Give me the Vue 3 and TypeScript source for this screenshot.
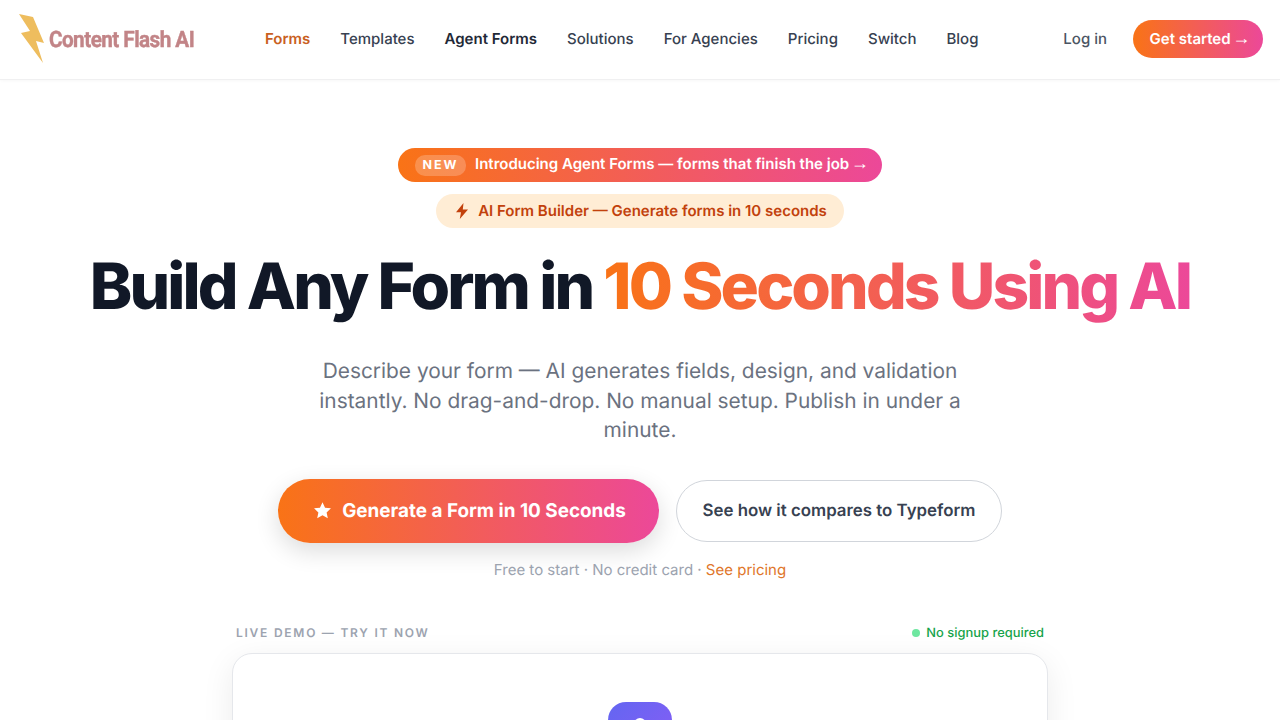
<script setup lang="ts">
const links: { label: string; cls?: string }[] = [
  { label: 'Forms', cls: 'active' },
  { label: 'Templates' },
  { label: 'Agent Forms', cls: 'dark' },
  { label: 'Solutions' },
  { label: 'For Agencies' },
  { label: 'Pricing' },
  { label: 'Switch' },
  { label: 'Blog' },
]
</script>

<template>
  <div class="page">
    <header class="topbar">
      <a class="logo">
        <svg class="bolt" width="28" height="50" viewBox="0 0 28 50">
          <path d="M1 0 L15 3 L26 29 L18 27 L25 49 L3 19 L12 17 Z" fill="#eebd5e" />
        </svg>
        <span class="logo-text">Content Flash AI</span>
      </a>
      <nav class="nav">
        <a v-for="l in links" :key="l.label" :class="['nav-link', l.cls]">{{ l.label }}</a>
      </nav>
      <div class="actions">
        <a class="login">Log in</a>
        <a class="start"><span>Get started <span class="arrow">→</span></span></a>
      </div>
    </header>

    <main class="hero">
      <a class="pill-new"><span class="new">NEW</span><span>Introducing Agent Forms — forms that finish the job <span class="arrow">→</span></span></a>
      <div class="pill-ai">
        <svg width="14" height="16" viewBox="0 0 14 16"><path d="M8.5 0 L1 9.2 H6 L4.8 16 L13 6.6 H7.8 Z" fill="#c2410c" /></svg>
        <span>AI Form Builder — Generate forms in 10 seconds</span>
      </div>
      <h1 class="title">Build Any Form in <span class="grad">10 Seconds Using AI</span></h1>
      <p class="sub">Describe your form — AI generates fields, design, and validation instantly. No drag-and-drop. No manual setup. Publish in under a minute.</p>
      <div class="cta">
        <a class="primary">
          <svg width="19" height="19" viewBox="0 0 24 24"><path d="M12 1.5l3.2 6.9 7.5.9-5.5 5.1 1.5 7.4L12 18.1l-6.7 3.7 1.5-7.4L1.3 9.3l7.5-.9z" fill="#fff" /></svg>
          Generate a Form in 10 Seconds
        </a>
        <a class="secondary">See how it compares to Typeform</a>
      </div>
      <p class="note">Free to start · No credit card · <a class="note-link">See pricing</a></p>
      <section class="demo">
        <div class="demo-head">
          <span class="demo-label">LIVE DEMO — TRY IT NOW</span>
          <span class="demo-free"><i class="dot"></i>No signup required</span>
        </div>
        <div class="demo-card">
          <div class="demo-icon">
            <svg width="40" height="40" viewBox="0 0 40 40"><circle cx="20" cy="10" r="6" fill="#fff" /></svg>
          </div>
        </div>
      </section>
    </main>
  </div>
</template>

<style>
html, body { margin: 0; overflow: hidden; background: #fff; }
</style>

<style scoped>
.page {
  height: 720px;
  overflow: hidden;
  font-family: Inter, "Liberation Sans", sans-serif;
  text-rendering: geometricPrecision;
  background: #fff;
}
.arrow {
  font-family: "Liberation Sans", sans-serif;
  font-weight: 700;
  font-size: 1.2em;
  line-height: 0;
  letter-spacing: -1px;
  margin-left: -2px;
}
.topbar {
  height: 80px;
  box-sizing: border-box;
  border-bottom: 1px solid #f0f0f1;
  box-shadow: 0 1px 3px rgba(0, 0, 0, 0.03);
  display: flex;
  align-items: center;
  padding: 0 17px 1px 18px;
}
.logo { display: flex; align-items: center; width: 247px; flex: none; }
.bolt { flex: none; }
.logo-text {
  font-family: Roboto, sans-serif;
  font-weight: 700;
  font-size: 22.5px;
  letter-spacing: -0.6px;
  color: #c28487;
  margin: 1px 0 0 3px;
  transform: scaleX(0.92);
  transform-origin: left center;
  white-space: nowrap;
  filter: blur(0.3px);
  -webkit-text-stroke: 0.4px #c28487;
}
.nav { display: flex; gap: 30px; flex: 1; margin-bottom: 2px; }
.nav-link { font-size: 15px; font-weight: 500; color: #374151; }
.nav-link.active { color: #c9601e; font-weight: 600; }
.nav-link.dark { color: #1f2937; font-weight: 600; }
.actions { display: flex; align-items: center; gap: 26px; }
.login { font-size: 15px; font-weight: 500; color: #4b5563; margin-bottom: 2px; }
.start {
  height: 38px;
  width: 130px;
  box-sizing: border-box;
  padding: 0 0 2px 3px;
  border-radius: 19px;
  display: flex;
  align-items: center;
  justify-content: center;
  color: #fff;
  font-size: 15px;
  font-weight: 600;
  background: linear-gradient(90deg, #f97316, #ec4899);
}
.hero {
  display: flex;
  flex-direction: column;
  align-items: center;
  padding-top: 68px;
}
.pill-new {
  height: 34px;
  width: 484px;
  box-sizing: border-box;
  padding: 0 0 3px 3px;
  border-radius: 17px;
  background: linear-gradient(90deg, #f97316, #ec4899);
  display: flex;
  align-items: center;
  justify-content: center;
  gap: 9px;
  color: #fff;
  font-size: 15px;
  font-weight: 600;
}
.new {
  background: rgba(255, 255, 255, 0.22);
  border-radius: 10px;
  height: 21px;
  width: 51px;
  margin-top: 3px;
  display: flex;
  align-items: center;
  justify-content: center;
  font-size: 12.5px;
  font-weight: 700;
  letter-spacing: 2px;
}
.pill-ai {
  margin-top: 12px;
  height: 34px;
  width: 408px;
  box-sizing: border-box;
  padding: 0 0 1px 2px;
  border-radius: 17px;
  background: #ffedd5;
  color: #c2410c;
  font-size: 15px;
  font-weight: 600;
  display: flex;
  align-items: center;
  justify-content: center;
  gap: 9px;
}
.title {
  margin: 20px 0 0;
  font-size: 64px;
  line-height: 78px;
  font-weight: 800;
  letter-spacing: -2.88px;
  color: #111827;
  white-space: nowrap;
}
.grad {
  background: linear-gradient(90deg, #f97316, #ec4899);
  -webkit-background-clip: text;
  background-clip: text;
  color: transparent;
}
.sub {
  margin: 31px 0 0;
  width: 680px;
  text-align: center;
  font-size: 20.88px;
  line-height: 29.5px;
  color: #6b7280;
}
.cta { display: flex; align-items: center; gap: 17px; margin-top: 33px; }
.primary {
  height: 64px;
  width: 381px;
  box-sizing: border-box;
  padding-left: 2px;
  border-radius: 32px;
  background: linear-gradient(90deg, #f97316, #ec4899);
  box-shadow: 0 8px 24px rgba(0, 0, 0, 0.14);
  display: flex;
  align-items: center;
  justify-content: center;
  gap: 10px;
  color: #fff;
  font-size: 18.9px;
  font-weight: 700;
}
.secondary {
  height: 62px;
  width: 326px;
  box-sizing: border-box;
  border: 1px solid #d1d5db;
  border-radius: 31px;
  display: flex;
  align-items: center;
  justify-content: center;
  color: #374151;
  font-size: 16.85px;
  font-weight: 600;
}
.note { margin: 17px 0 0; font-size: 15px; line-height: 20px; color: #9ca3af; }
.note-link { color: #e0762a; font-weight: 400; }
.demo { width: 816px; margin-top: 43px; }
.demo-head {
  display: flex;
  justify-content: space-between;
  align-items: center;
  padding: 0 4px;
  height: 20px;
}
.demo-label { font-size: 12px; font-weight: 600; letter-spacing: 1.75px; color: #9ca3af; }
.demo-free { display: flex; align-items: center; gap: 6px; font-size: 12.9px; padding-top: 1px; font-weight: 500; color: #16a34a; }
.dot { width: 8px; height: 8px; border-radius: 50%; background: #6ee7a0; }
.demo-card {
  margin-top: 10px;
  height: 200px;
  border: 1px solid #e5e7eb;
  border-radius: 20px;
  box-shadow: 0 8px 32px rgba(0, 0, 0, 0.08);
  display: flex;
  justify-content: center;
  padding-top: 48px;
  box-sizing: border-box;
  background: #fff;
}
.demo-icon {
  width: 64px;
  height: 64px;
  border-radius: 18px;
  background: linear-gradient(135deg, #6366f1, #8b5cf6);
  display: flex;
  align-items: center;
  justify-content: center;
}
</style>
